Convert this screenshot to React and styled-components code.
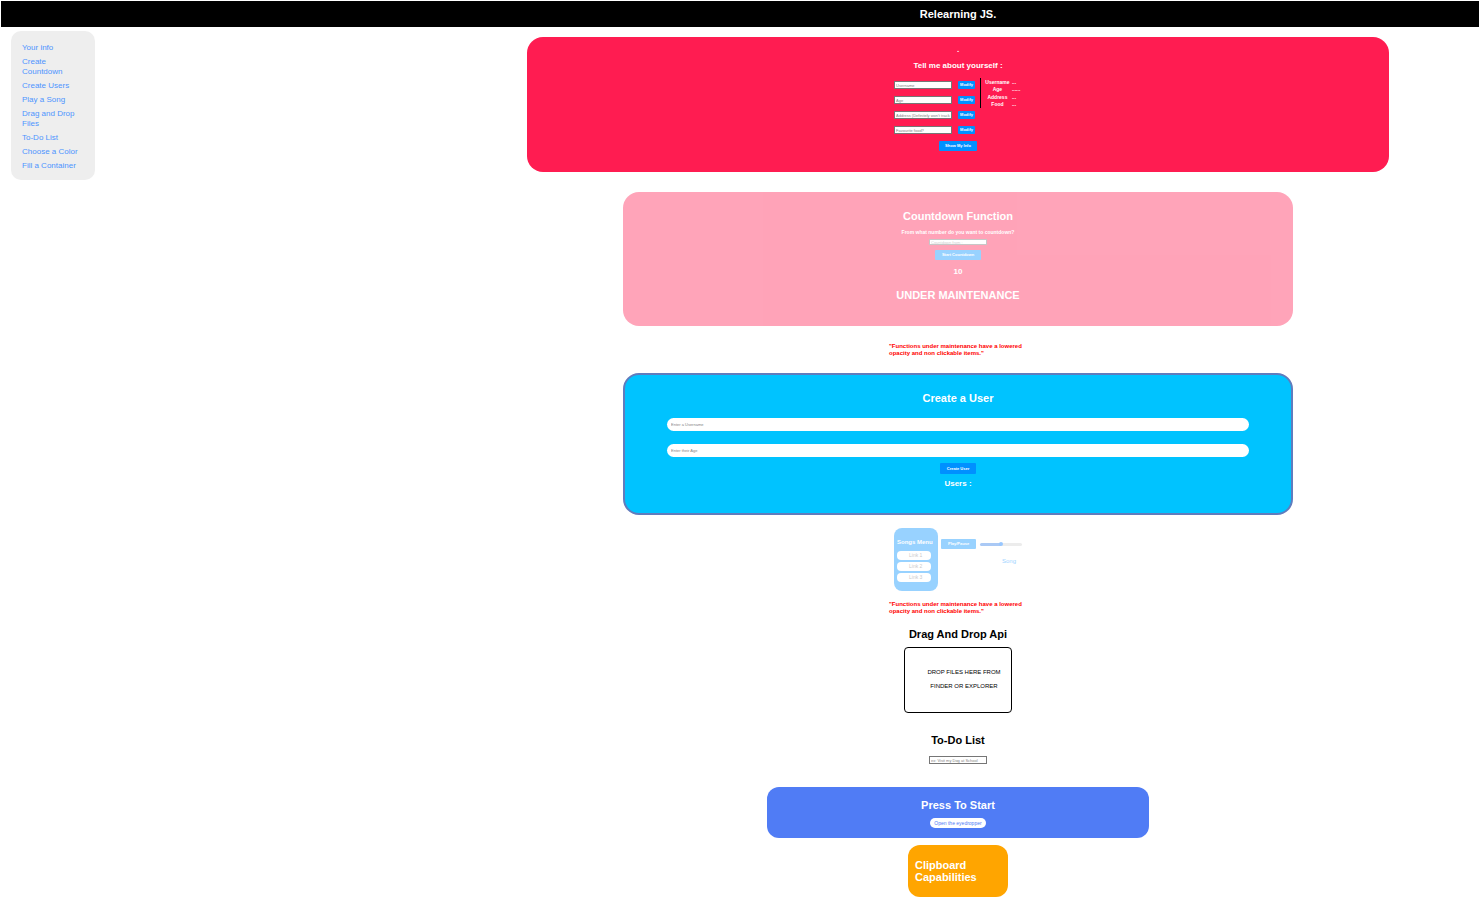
import React from "react";
import styled, { createGlobalStyle } from "styled-components";

const Global = createGlobalStyle`
  * { box-sizing: border-box; }
  body { margin: 0; background: #fff; color: #000; font-family: "Liberation Sans", Arial, sans-serif; }
  h1, h2, h3, p, ul { margin: 0; padding: 0; }
  ul { list-style: none; }
  button, input { font-family: inherit; margin: 0; }
`;

const Page = styled.div`
  padding: 1px 0 8px 1px;
`;

const columns = `
  display: grid;
  grid-template-columns: 29.5% 1fr;
`;

const Header = styled.header`
  ${columns}
  background: #000;
  height: 26px;
  align-items: center;
`;

const SiteTitle = styled.h1`
  grid-column: 2;
  color: #fff;
  font-size: 11px;
  line-height: 12px;
  text-align: center;
`;

const Body = styled.div`
  ${columns}
  align-items: start;
`;

const Sidebar = styled.nav`
  width: 84px;
  margin: 4px 0 0 10px;
  padding: 12px 10px 9px 11px;
  border-radius: 10px;
  background: #eee;
`;

const NavList = styled.ul`
  display: flex;
  flex-direction: column;
  gap: 4px;
`;

const NavLink = styled.a`
  display: block;
  color: #4d94ff;
  font-size: 8px;
  line-height: 10px;
  text-decoration: none;
`;

const Main = styled.main`
  display: flex;
  flex-direction: column;
  align-items: center;
  padding-top: 10px;
`;

const Card = styled.section`
  display: flex;
  flex-direction: column;
  align-items: center;
  width: ${(p) => p.$width};
  padding: ${(p) => p.$pad};
  margin-bottom: ${(p) => p.$after}px;
  border-radius: ${(p) => p.$radius || 16}px;
  border: ${(p) => p.$border || "none"};
  background: ${(p) => p.$bg};
  color: #fff;
  opacity: ${(p) => (p.$disabled ? 0.4 : 1)};
`;

const Title = styled.h2`
  font-size: 11px;
  line-height: 12px;
  margin-bottom: ${(p) => p.$after || 0}px;
`;

const Subtitle = styled.h3`
  font-size: 8px;
  line-height: 10px;
  margin-bottom: ${(p) => p.$after || 0}px;
`;

const Button = styled.button`
  height: ${(p) => p.$height || 10}px;
  padding: 0 ${(p) => p.$padX || 6}px;
  margin-bottom: ${(p) => p.$after || 0}px;
  border: 0;
  border-radius: 1px;
  background: #0090ff;
  color: #fff;
  font-size: 4px;
  font-weight: bold;
  line-height: 8px;
  white-space: nowrap;
`;

const SmallInput = styled.input`
  width: 58px;
  height: ${(p) => p.$height || 8}px;
  padding: 0 1px;
  margin-bottom: ${(p) => p.$after || 0}px;
  border: 1px solid #767676;
  background: #fff;
  font-size: 4px;
  line-height: 4px;
  &::placeholder { color: #858585; }
`;

const InfoPanel = styled.div`
  display: flex;
  align-items: flex-start;
  gap: 5px;
  margin-bottom: 7px;
`;

const InfoForm = styled.form`
  display: flex;
  flex-direction: column;
  gap: 7px;
  padding-top: 3px;
`;

const InfoRow = styled.div`
  display: flex;
  gap: 6px;
`;

const InfoSummary = styled.table`
  width: 42px;
  border-left: 1px solid #000;
  border-collapse: separate;
  border-spacing: 0;
  height: 30px;
  font-size: 5px;
  font-weight: bold;
  line-height: 6px;

  th { width: 31px; padding: 0 0 0 2px; text-align: center; }
  td { padding: 0; text-align: left; }
`;

const Question = styled.label`
  font-size: 5px;
  font-weight: bold;
  line-height: 6px;
  margin-bottom: 4px;
`;

const Notice = styled.p`
  width: 138px;
  color: #f00;
  font-size: 6px;
  font-weight: bold;
  line-height: 7px;
  margin-bottom: ${(p) => p.$after}px;
`;

const UserForm = styled.form`
  display: flex;
  flex-direction: column;
  align-items: center;
  width: 100%;
`;

const PillInput = styled.input`
  width: 100%;
  height: 13px;
  padding: 0 4px;
  border: 0;
  border-radius: 7px;
  background: #fff;
  font-size: 4px;
  margin-bottom: ${(p) => p.$after}px;
  &::placeholder { color: #858585; }
`;

const Player = styled.section`
  display: flex;
  align-items: flex-start;
  width: 128px;
  gap: 3px;
  margin-bottom: 10px;
  opacity: 0.4;
`;

const SongMenu = styled.div`
  flex: none;
  width: 44px;
  height: 63px;
  padding: 11px 3px 0;
  border-radius: 8px;
  background: #0090ff;
  color: #fff;
`;

const SongMenuTitle = styled.h3`
  font-size: 6px;
  line-height: 7px;
  margin-bottom: 5px;
  white-space: nowrap;
`;

const SongList = styled.ul`
  display: flex;
  flex-direction: column;
  gap: 2px;
`;

const SongLink = styled.a`
  display: block;
  width: 34px;
  padding-left: 12px;
  border-radius: 4px;
  background: #fff;
  color: #777;
  font-size: 5px;
  line-height: 9px;
  text-decoration: none;
`;

const PlayerControls = styled.div`
  display: flex;
  flex-direction: column;
  align-items: flex-end;
  flex: 1;
  min-width: 0;
  padding-top: 11px;
  gap: 9px;
`;

const ControlRow = styled.div`
  display: flex;
  align-items: center;
  width: 100%;
  gap: 4px;
`;

const Volume = styled.input`
  appearance: none;
  flex: none;
  width: 42px;
  height: 3px;
  border-radius: 2px;
  background: linear-gradient(90deg, #2c7be8 50%, #d0d0d0 50%);

  &::-webkit-slider-thumb {
    appearance: none;
    width: 4px;
    height: 4px;
    border-radius: 50%;
    background: #0075ff;
  }
`;

const SongName = styled.p`
  padding-right: 6px;
  color: #0090ff;
  font-size: 6px;
  line-height: 7px;
`;

const DropZone = styled.div`
  width: 108px;
  height: 66px;
  padding: 17px 8px 0 20px;
  margin-bottom: 21px;
  border: 1px solid #000;
  border-radius: 4px;
  font-size: 6px;
  line-height: 14px;
  text-align: center;
  white-space: nowrap;
`;

const PickerButton = styled.button`
  width: 56px;
  height: 10px;
  padding: 0;
  border: 0;
  border-radius: 5px;
  background: #fff;
  color: #507cf5;
  font-size: 5px;
  line-height: 8px;
`;

const ClipboardCard = styled.section`
  width: 100px;
  padding: 14px 7px;
  border-radius: 12px;
  background: orange;
  color: #fff;
`;

const links = [
  ["Your info", "info"],
  ["Create Countdown", "countdown"],
  ["Create Users", "users"],
  ["Play a Song", "songs"],
  ["Drag and Drop Files", "drop"],
  ["To-Do List", "todo"],
  ["Choose a Color", "color"],
  ["Fill a Container", "clipboard"],
];

const fields = ["Username", "Age", "Address (Definitely won't track you)", "Favourite food?"];

const summary = [
  ["Username", "..."],
  ["Age", "......"],
  ["Address", "..."],
  ["Food", "..."],
];

const maintenance = "\"Functions under maintenance have a lowered opacity and non clickable items.\"";

export default function App() {
  return (
    <Page>
      <Global />
      <Header>
        <SiteTitle>Relearning JS.</SiteTitle>
      </Header>
      <Body>
        <Sidebar>
          <NavList>
            {links.map(([text, id]) => (
              <li key={id}>
                <NavLink href={`#${id}`}>{text}</NavLink>
              </li>
            ))}
          </NavList>
        </Sidebar>
        <Main>
          <Card id="info" $width="82.7%" $pad="8px 0 21px" $bg="#ff1c51" $after={20}>
            <Subtitle $after={6}>.</Subtitle>
            <Subtitle $after={7}>Tell me about yourself :</Subtitle>
            <InfoPanel>
              <InfoForm>
                {fields.map((name) => (
                  <InfoRow key={name}>
                    <SmallInput aria-label={name} placeholder={name} />
                    <Button type="button" $height={8} $padX={2}>Modify</Button>
                  </InfoRow>
                ))}
              </InfoForm>
              <InfoSummary>
                <tbody>
                  {summary.map(([name, value]) => (
                    <tr key={name}>
                      <th scope="row">{name}</th>
                      <td>{value}</td>
                    </tr>
                  ))}
                </tbody>
              </InfoSummary>
            </InfoPanel>
            <Button type="button">Show My Info</Button>
          </Card>

          <Card id="countdown" $width="64.3%" $pad="18px 0 25px" $bg="#ff1c51" $after={17} $disabled>
            <Title $after={7}>Countdown Function</Title>
            <Question htmlFor="countdown-from">From what number do you want to countdown?</Question>
            <SmallInput id="countdown-from" placeholder="Countdown from :" $height={6} $after={5} />
            <Button type="button" $padX={7} $after={7}>Start Countdown</Button>
            <Subtitle $after={12}>10</Subtitle>
            <Title>UNDER MAINTENANCE</Title>
          </Card>

          <Notice $after={16}>{maintenance}</Notice>

          <Card id="users" $width="64.3%" $pad="17px 42px 24px" $bg="#00c3ff" $border="2px solid #607cbd" $after={13}>
            <Title $after={14}>Create a User</Title>
            <UserForm>
              <PillInput aria-label="Username" placeholder="Enter a Username" $after={13} />
              <PillInput aria-label="Age" placeholder="Enter their Age" $after={6} />
              <Button type="button" $height={11} $padX={7} $after={5}>Create User</Button>
            </UserForm>
            <Subtitle>Users :</Subtitle>
          </Card>

          <Player id="songs">
            <SongMenu>
              <SongMenuTitle>Songs Menu</SongMenuTitle>
              <SongList>
                {[1, 2, 3].map((n) => (
                  <li key={n}>
                    <SongLink href="#songs">Link {n}</SongLink>
                  </li>
                ))}
              </SongList>
            </SongMenu>
            <PlayerControls>
              <ControlRow>
                <Button type="button" $padX={7}>Play/Pause</Button>
                <Volume type="range" aria-label="Volume" />
              </ControlRow>
              <SongName>Song</SongName>
            </PlayerControls>
          </Player>

          <Notice $after={13}>{maintenance}</Notice>

          <Title id="drop" $after={7}>Drag And Drop Api</Title>
          <DropZone>
            <p>DROP FILES HERE FROM</p>
            <p>FINDER OR EXPLORER</p>
          </DropZone>

          <Title id="todo" $after={10}>To-Do List</Title>
          <SmallInput aria-label="To-do item" placeholder="ex: Visit my Dog at School" $after={23} />

          <Card id="color" $width="36.7%" $pad="12px 0 10px" $bg="#507cf5" $radius={12} $after={7}>
            <Title $after={7}>Press To Start</Title>
            <PickerButton type="button">Open the eyedropper</PickerButton>
          </Card>

          <ClipboardCard id="clipboard">
            <Title>Clipboard Capabilities</Title>
          </ClipboardCard>
        </Main>
      </Body>
    </Page>
  );
}
